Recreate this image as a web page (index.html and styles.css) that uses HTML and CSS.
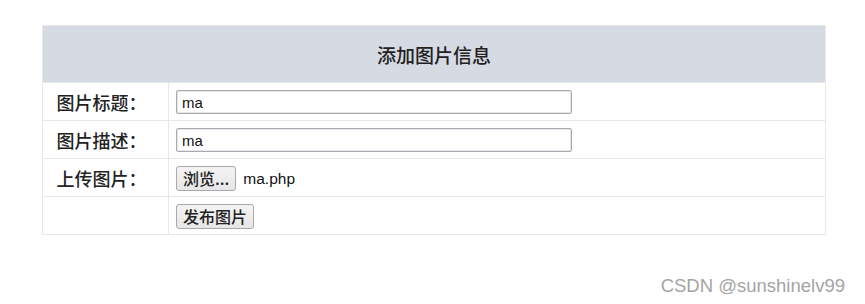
FILE: index.html
```html
<!DOCTYPE html>
<html lang="zh">
<head>
<meta charset="utf-8">
<link rel="stylesheet" href="styles.css">
</head>
<body>
<div class="page">
  <table class="form-table">
    <tr>
      <th colspan="2" class="head">添加图片信息</th>
    </tr>
    <tr>
      <td class="label">图片标题：</td>
      <td class="field"><input class="text" type="text" value="ma"></td>
    </tr>
    <tr>
      <td class="label">图片描述：</td>
      <td class="field"><input class="text" type="text" value="ma"></td>
    </tr>
    <tr>
      <td class="label">上传图片：</td>
      <td class="field"><span class="btn">浏览...</span><span class="file">ma.php</span></td>
    </tr>
    <tr>
      <td class="label"></td>
      <td class="field"><span class="btn">发布图片</span></td>
    </tr>
  </table>
  <div class="mark">CSDN @sunshinelv99</div>
</div>
</body>
</html>
```
FILE: styles.css
```css
html, body {
  margin: 0;
  padding: 0;
  background: #fff;
}
body {
  font-family: "Noto Sans CJK SC", "Noto Sans", sans-serif;
  color: #222;
}
.page {
  padding: 25px 40px 0 42px;
  position: relative;
  height: 304px;
  box-sizing: border-box;
}
.form-table {
  width: 784px;
  border-collapse: collapse;
  border: 1px solid #e3e3e3;
}
.form-table td, .form-table th {
  border: 1px solid #e8e8e8;
  padding: 0;
}
.head {
  height: 56px;
  background: #d6dae2;
  font-weight: 500;
  font-size: 19px;
  text-align: center;
  color: #222;
}
.form-table td {
  height: 37px;
}
.label {
  width: 126px;
  text-align: center;
  font-size: 18px;
  font-weight: 500;
  padding-right: 8px !important;
  box-sizing: border-box;
}
.field {
  padding-left: 7px !important;
  vertical-align: middle;
}
.text {
  width: 396px;
  height: 24px;
  box-sizing: border-box;
  border: 1px solid #a9a9b0;
  border-radius: 2px;
  padding: 0 5px;
  font-family: "Liberation Sans", "Noto Sans", sans-serif;
  font-size: 15px;
  color: #111;
  box-shadow: inset 0 0 0 1px #e6e6ea;
}
.btn {
  display: inline-block;
  box-sizing: border-box;
  height: 25px;
  line-height: 22px;
  padding: 0 6px;
  border: 1px solid #a8a8ad;
  border-radius: 3px;
  background: linear-gradient(#f4f4f4, #e6e6e6);
  font-size: 16px;
  font-weight: 500;
  color: #222;
  vertical-align: middle;
}
.file {
  margin-left: 7px;
  font-family: "Liberation Sans", "Noto Sans", sans-serif;
  font-size: 15.5px;
  vertical-align: middle;
  color: #111;
}
.mark {
  position: absolute;
  right: 20px;
  top: 275px;
  font-family: "Liberation Sans", "Noto Sans", sans-serif;
  font-size: 18.5px;
  color: #a4a4a4;
}
```
